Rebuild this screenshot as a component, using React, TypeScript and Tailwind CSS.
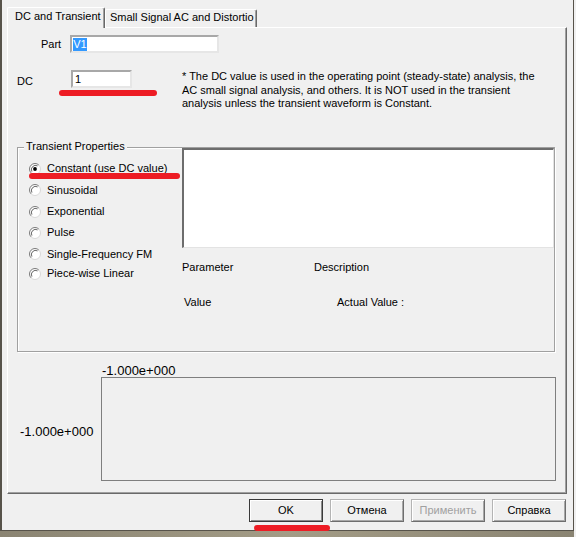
import React from "react";

function Radio({ checked }: { checked?: boolean }) {
  return (
    <svg width="12" height="12" viewBox="0 0 12 12" className="shrink-0">
      <circle cx="6" cy="6" r="5.5" fill="#ffffff" />
      <path d="M2.11 9.89 A5.5 5.5 0 0 1 9.89 2.11" stroke="#7a7a7a" strokeWidth="1" fill="none" />
      <path d="M9.89 2.11 A5.5 5.5 0 0 1 2.11 9.89" stroke="#d8d8d8" strokeWidth="1" fill="none" />
      <path d="M2.9 8.6 A4.2 4.2 0 0 1 8.6 2.9" stroke="#404040" strokeWidth="0.8" fill="none" />
      {checked && <circle cx="6" cy="6" r="1.9" fill="#000000" />}
    </svg>
  );
}

function RadioRow({ label, checked, h }: { label: string; checked?: boolean; h: string }) {
  return (
    <div className={`flex items-center gap-[6px] pl-[11px] ${h}`}>
      <Radio checked={checked} />
      <span className="whitespace-nowrap leading-[13px]">{label}</span>
    </div>
  );
}

function Btn({ label, isDefault, disabled }: { label: string; isDefault?: boolean; disabled?: boolean }) {
  return (
    <div
      className={
        "w-[74px] h-[23px] flex items-center justify-center bg-[#f0f0f0] border " +
        (isDefault
          ? "border-[#3a3a3a] shadow-[inset_1px_1px_0_#ffffff,inset_-1px_-1px_0_#8a8a8a]"
          : "border-[#b4b4b4] border-r-[#6e6e6e] border-b-[#6e6e6e] shadow-[inset_1px_1px_0_#ffffff,inset_-1px_-1px_0_#a8a8a8]") +
        (disabled ? " text-[#a0a0a0]" : " text-black")
      }
    >
      <span className="leading-[13px]">{label}</span>
    </div>
  );
}

export default function App() {
  return (
    <div className="w-[576px] h-[537px] bg-[#f0f0f0] overflow-hidden font-['Liberation_Sans',Arial,sans-serif] text-[11px] text-black">
      <div className="w-[574px] h-[531px] border-l-2 border-r border-b border-[#57534a] flex flex-col">
        {/* Tabs */}
        <div className="flex items-end h-[20px] mt-[7px] ml-[5px]">
          <div className="relative z-10 -mb-[1px] w-[98px] h-[21px] bg-[#f0f0f0] border-t border-l border-white border-r border-r-[#696969] rounded-t-[2px] shadow-[inset_-1px_0_0_#a0a0a0] pl-[7px]">
            <span className="block leading-[16px] whitespace-nowrap">DC and Transient</span>
          </div>
          <div className="w-[152px] h-[18px] bg-[#f0f0f0] border-t border-l border-white border-r border-r-[#696969] rounded-t-[2px] shadow-[inset_-1px_0_0_#a0a0a0] pl-[4px] overflow-hidden">
            <span className="block leading-[15px] whitespace-nowrap">Small Signal AC and Distortio</span>
          </div>
        </div>

        {/* Panel */}
        <div className="ml-[5px] w-[560px] h-[467px] border-t border-l border-white border-r border-b border-r-[#696969] border-b-[#696969] shadow-[inset_-1px_-1px_0_#a0a0a0] flex flex-col">
          {/* Part row */}
          <div className="flex items-center mt-[7px] h-[18px] pl-[33px] gap-[9px]">
            <span className="leading-[13px]">Part</span>
            <div className="w-[149px] h-[18px] bg-white border-2 border-t-[#a8a8a8] border-l-[#a8a8a8] border-r-[#e6e6e6] border-b-[#e6e6e6] flex items-center pl-[1px]">
              <span className="bg-[#3399ff] text-white leading-[13px]">V1</span>
            </div>
          </div>

          {/* DC row */}
          <div className="relative flex items-start mt-[17px] h-[41px] pl-[9px]">
            <span className="w-[54px] h-[18px] leading-[18px] mt-[2px]">DC</span>
            <div className="w-[61px] h-[18px] bg-white border-2 border-t-[#a8a8a8] border-l-[#a8a8a8] border-r-[#e6e6e6] border-b-[#e6e6e6] flex items-center pl-[2px]">
              <span className="leading-[13px]">1</span>
            </div>
            <div className="ml-[50px] leading-[13.5px] whitespace-nowrap">
              * The DC value is used in the operating point (steady-state) analysis, the
              <br />
              AC small signal analysis, and others. It is NOT used in the transient
              <br />
              analysis unless the transient waveform is Constant.
            </div>
            <div className="absolute left-[51px] top-[20px] w-[98px] h-[6px] rounded-full bg-[#ed1c24]" />
          </div>

          {/* Group box */}
          <div className="relative mt-[36px] ml-[9px] w-[538px] h-[205px] border border-[#a0a0a0] shadow-[1px_1px_0_#ffffff,inset_1px_1px_0_#ffffff] flex">
            <span className="absolute left-[6px] -top-[8px] px-[2px] bg-[#f0f0f0] leading-[13px] whitespace-nowrap">
              Transient Properties
            </span>
            <div className="relative w-[164px] pt-[10px] flex flex-col">
              <RadioRow label="Constant (use DC value)" checked h="h-[21px]" />
              <RadioRow label="Sinusoidal" h="h-[22px]" />
              <RadioRow label="Exponential" h="h-[21px]" />
              <RadioRow label="Pulse" h="h-[21px]" />
              <RadioRow label="Single-Frequency FM" h="h-[22px]" />
              <RadioRow label="Piece-wise Linear" h="h-[17px]" />
              <div className="absolute left-[11px] top-[25px] w-[151px] h-[6px] rounded-full bg-[#ed1c24]" />
            </div>
            <div className="flex-1 flex flex-col">
              <div className="h-[100px] bg-white border-t-2 border-l-2 border-t-[#6d6d6d] border-l-[#6d6d6d] border-r border-b border-r-[#e3e3e3] border-b-[#e3e3e3]" />
              <div className="flex mt-[12px] h-[14px] leading-[14px]">
                <span className="w-[132px]">Parameter</span>
                <span>Description</span>
              </div>
              <div className="flex mt-[21px] h-[14px] leading-[14px] pl-[2px]">
                <span className="w-[153px]">Value</span>
                <span>Actual Value :</span>
              </div>
            </div>
          </div>

          {/* Chart */}
          <div className="flex mt-[12px] text-[13px]">
            <div className="w-[93px] pl-[12px]">
              <div className="mt-[60px] leading-[15px] whitespace-nowrap">-1.000e+000</div>
            </div>
            <div className="flex flex-col">
              <div className="h-[13px] leading-[13px] pl-[1px] whitespace-nowrap">-1.000e+000</div>
              <div className="w-[455px] h-[104px] border border-[#7f7f7f]" />
            </div>
          </div>
        </div>

        {/* Buttons */}
        <div className="relative flex justify-end gap-[7px] pr-[7px] mt-[5px]">
          <Btn label="OK" isDefault />
          <Btn label="Отмена" />
          <Btn label="Применить" disabled />
          <Btn label="Справка" />
          <div className="absolute left-[252px] top-[26px] w-[76px] h-[6px] rounded-full bg-[#ed1c24]" />
        </div>
      </div>
      <div className="w-[574px] h-[6px] bg-gradient-to-r from-[#8a8472] via-[#a39c86] to-[#8a8472]" />
    </div>
  );
}
